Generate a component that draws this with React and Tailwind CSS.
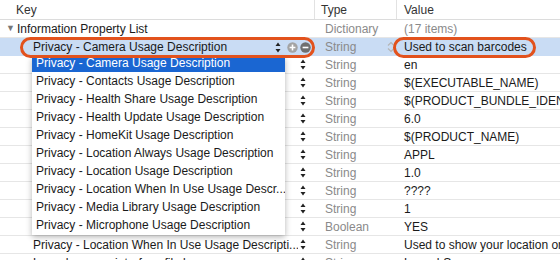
import React from 'react';

const font = { fontFamily: '"Liberation Sans", Arial, sans-serif' };

const Stepper = () => (
  <svg width="6" height="11" viewBox="0 0 6 11" className="shrink-0">
    <path d="M3 0.5 L5.5 4 L0.5 4 Z" fill="#222" />
    <path d="M3 10.5 L5.5 7 L0.5 7 Z" fill="#222" />
  </svg>
);

const rows = [
  { type: 'String', value: 'en' },
  { type: 'String', value: '$(EXECUTABLE_NAME)' },
  { type: 'String', value: '$(PRODUCT_BUNDLE_IDENTI' },
  { type: 'String', value: '6.0' },
  { type: 'String', value: '$(PRODUCT_NAME)' },
  { type: 'String', value: 'APPL' },
  { type: 'String', value: '1.0' },
  { type: 'String', value: '????' },
  { type: 'String', value: '1' },
  { type: 'Boolean', value: 'YES' },
  { key: 'Privacy - Location When In Use Usage Descripti...', type: 'String', value: 'Used to show your location or' },
  { key: 'Launch screen interface file base name', type: 'String', value: 'LaunchScreen' },
];

const menuItems = [
  'Privacy - Contacts Usage Description',
  'Privacy - Health Share Usage Description',
  'Privacy - Health Update Usage Description',
  'Privacy - HomeKit Usage Description',
  'Privacy - Location Always Usage Description',
  'Privacy - Location Usage Description',
  'Privacy - Location When In Use Usage Descr...',
  'Privacy - Media Library Usage Description',
  'Privacy - Microphone Usage Description',
];

const Row = ({ keyText, type, value }) => (
  <div className="flex h-[18px] items-center border-b border-[#e6e6e6] text-[12px] text-[#1a1a1a] whitespace-nowrap">
    <div className="flex w-[316px] shrink-0 items-center">
      <span className="w-[298px] overflow-hidden pl-[33px]">{keyText}</span>
      <span className="ml-[2px]"><Stepper /></span>
    </div>
    <div className="w-[82px] shrink-0 pl-[9px] text-[#8a8a8a]">{type}</div>
    <div className="flex-1 overflow-hidden pl-[6px]">{value}</div>
  </div>
);

export default function App() {
  return (
    <div className="relative h-[260px] w-[560px] overflow-hidden bg-white" style={font}>
      {/* header */}
      <div className="flex h-[20px] items-center border-b border-[#dcdcdc] text-[12px] text-[#333]">
        <div className="w-[314px] shrink-0 pl-[16px]">Key</div>
        <div className="flex h-full w-[82px] shrink-0 items-center border-l border-[#e2e2e2] pl-[6px]">Type</div>
        <div className="flex h-full flex-1 items-center border-l border-[#e2e2e2] pl-[7px]">Value</div>
      </div>

      {/* root row */}
      <div className="flex h-[18px] items-center border-b border-[#e6e6e6] text-[12px] whitespace-nowrap">
        <div className="flex w-[316px] shrink-0 items-center text-[#1a1a1a]">
          <span className="ml-[6px] mr-[2px] text-[9px] text-[#777]">▼</span>
          <span>Information Property List</span>
        </div>
        <div className="w-[82px] shrink-0 pl-[9px] text-[#8a8a8a]">Dictionary</div>
        <div className="flex-1 pl-[6px] text-[#8a8a8a]">(17 items)</div>
      </div>

      {/* selected row */}
      <div className="flex h-[18px] items-center bg-[#c9dcf4] text-[12px] text-[#1a1a1a] whitespace-nowrap">
        <div className="flex w-[316px] shrink-0 items-center">
          <span className="w-[242px] pl-[33px]">Privacy - Camera Usage Description</span>
          <span className="ml-[33px]"><Stepper /></span>
          <svg width="11" height="11" viewBox="0 0 11 11" className="ml-[6px]">
            <circle cx="5.5" cy="5.5" r="5.2" fill="#a3a3a3" />
            <path d="M5.5 2.6 V8.4 M2.6 5.5 H8.4" stroke="#fff" strokeWidth="1.6" />
          </svg>
          <svg width="11" height="11" viewBox="0 0 11 11" className="ml-[2px]">
            <circle cx="5.5" cy="5.5" r="5.2" fill="#6f6f6f" />
            <path d="M2.6 5.5 H8.4" stroke="#fff" strokeWidth="1.6" />
          </svg>
        </div>
        <div className="flex w-[82px] shrink-0 items-center pl-[9px] text-[#8a8a8a]">
          <span className="w-[62px]">String</span>
          <svg width="8" height="12" viewBox="0 0 8 12">
            <path d="M1 4.5 L4 1.5 L7 4.5 M1 7.5 L4 10.5 L7 7.5" stroke="#b5b5b5" strokeWidth="1.2" fill="none" />
          </svg>
        </div>
        <div className="flex-1 pl-[6px]">Used to scan barcodes</div>
      </div>

      {rows.map((r, i) => (
        <Row key={i} keyText={r.key || ''} type={r.type} value={r.value} />
      ))}

      {/* popup menu */}
      <div className="absolute left-[32px] top-[57px] h-[178px] w-[253px] overflow-hidden bg-white text-[12px] text-[#1a1a1a] shadow-[0_2px_6px_rgba(0,0,0,0.3)] whitespace-nowrap">
        <div className="-mt-[3px] flex h-[18px] items-center bg-[#1a66d2] pl-[4px] text-white">
          Privacy - Camera Usage Description
        </div>
        {menuItems.map((m) => (
          <div key={m} className="flex h-[18px] items-center pl-[4px]">{m}</div>
        ))}
      </div>

      {/* orange annotation outlines */}
      <div className="absolute left-[20px] top-[37px] h-[21px] w-[295px] rounded-full border-[3px] border-[#e2521d]" />
      <div className="absolute left-[393px] top-[37px] h-[21px] w-[143px] rounded-full border-[3px] border-[#e2521d]" />
    </div>
  );
}
